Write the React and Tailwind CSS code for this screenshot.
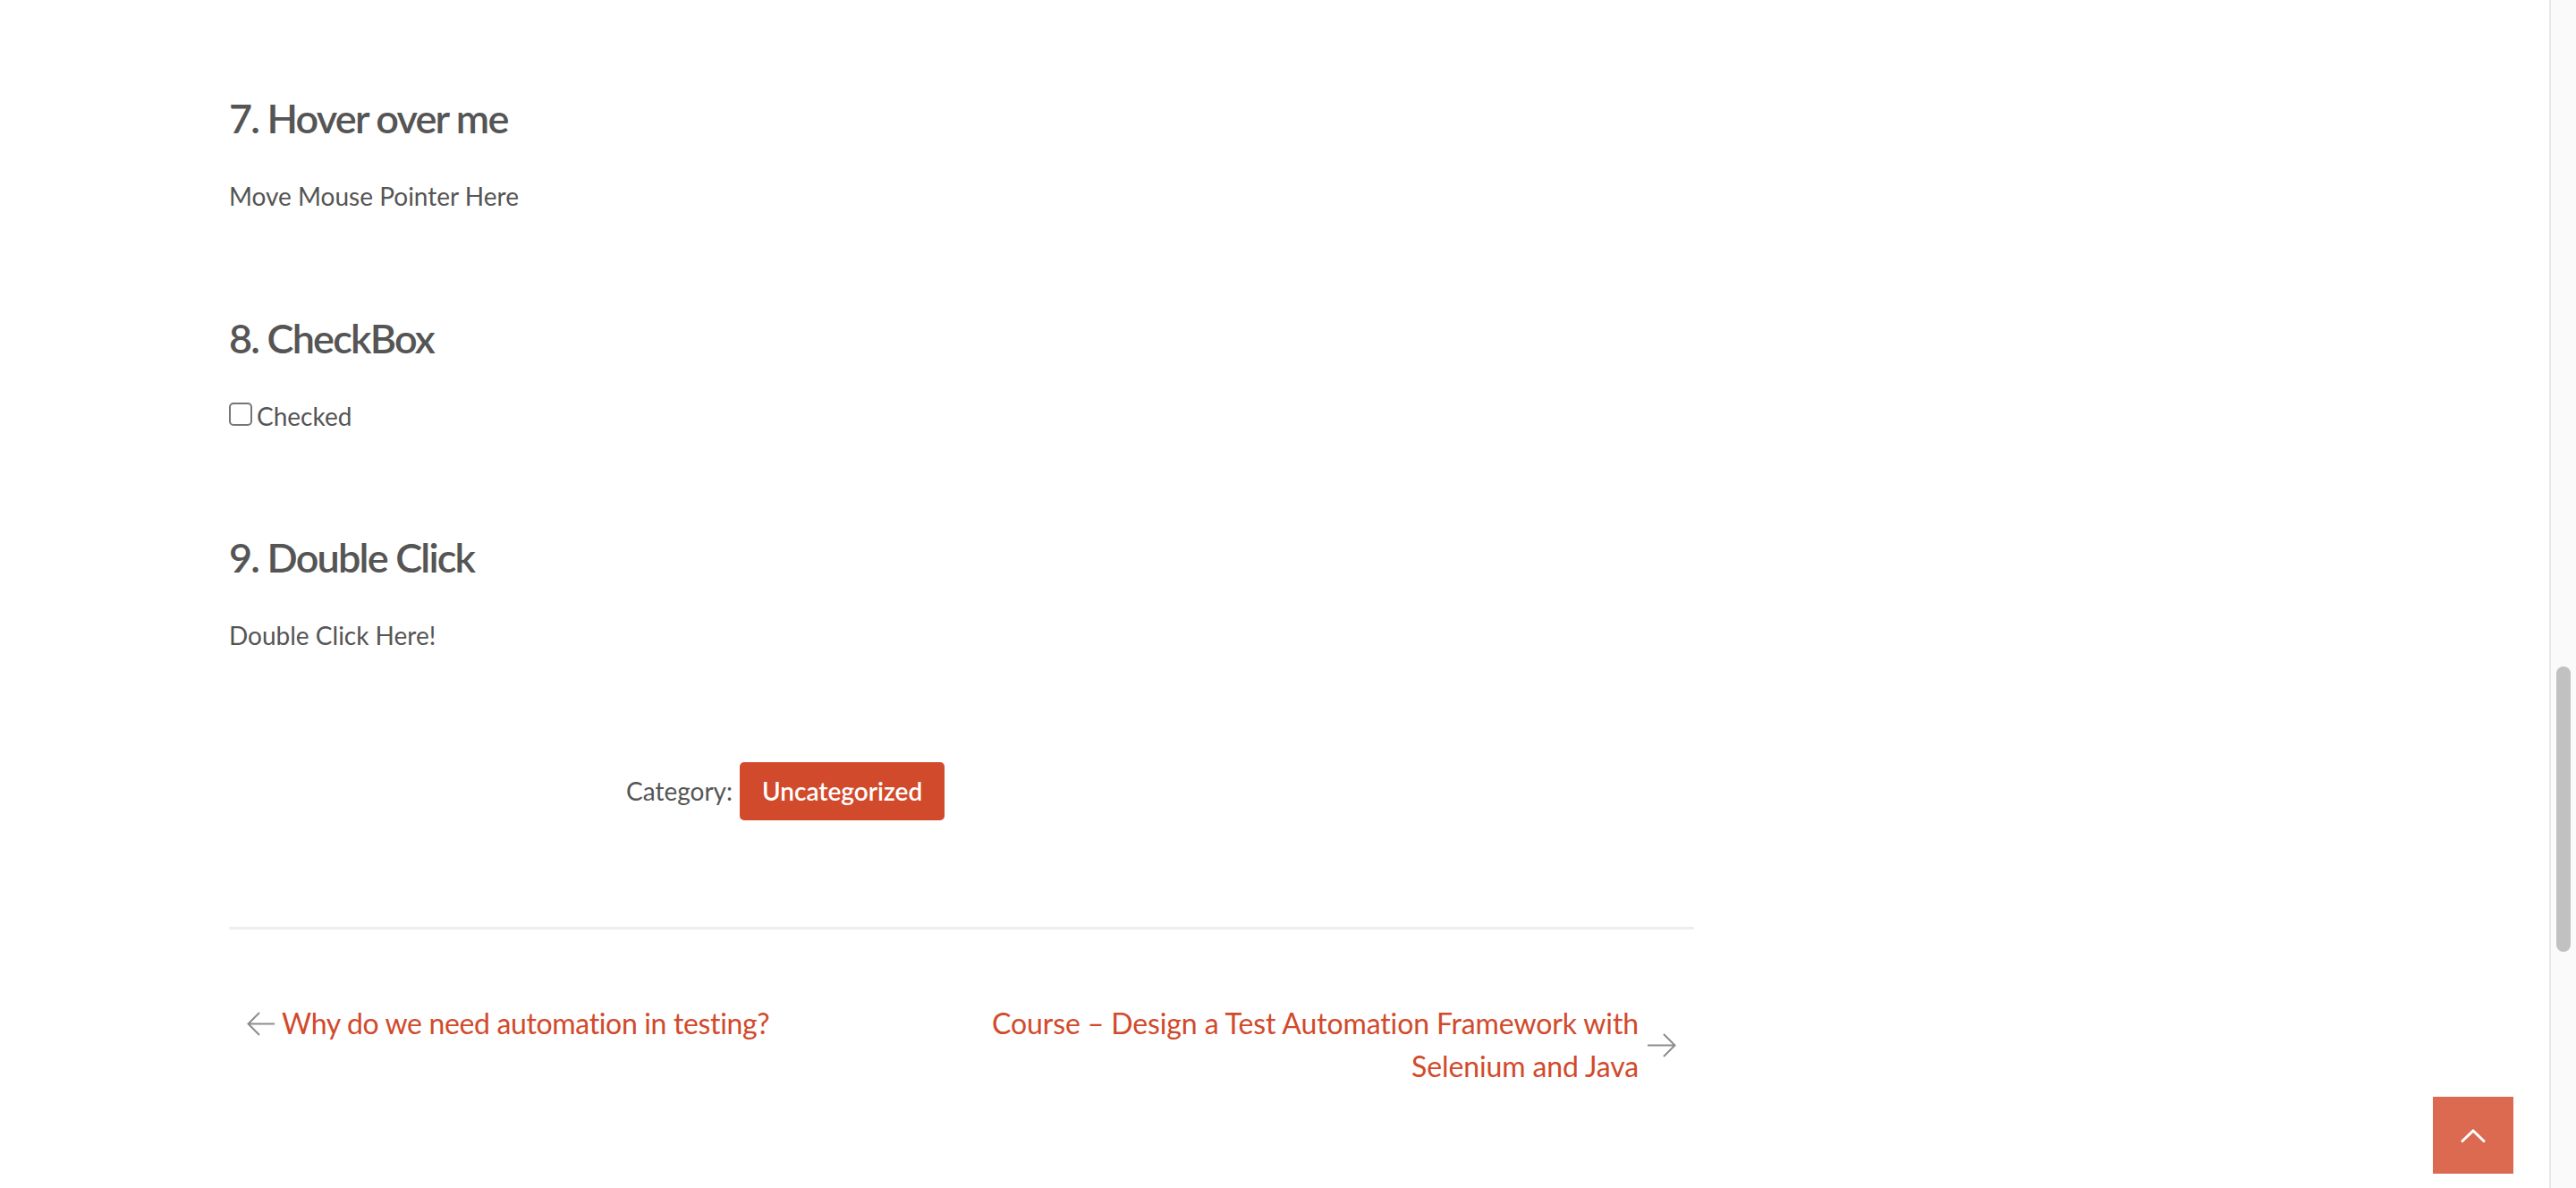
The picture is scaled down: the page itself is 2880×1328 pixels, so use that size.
import React from "react"

function Section({ title, children, className = "" }) {
  return (
    <section className={className}>
      <h2 className="text-[45px] leading-[54px] font-semibold tracking-[-1.8px] text-[#555]">{title}</h2>
      <div className="mt-[40px] text-[28px] leading-[40px]">{children}</div>
    </section>
  )
}

function ArrowLeft() {
  return (
    <svg width="31" height="27" viewBox="0 0 31 27" fill="none" stroke="#8c8c8c" strokeWidth="2">
      <path d="M1.5 13.5H31M14 1L1.5 13.5L14 26" />
    </svg>
  )
}

function ArrowRight() {
  return (
    <svg width="32" height="27" viewBox="0 0 32 27" fill="none" stroke="#8c8c8c" strokeWidth="2">
      <path d="M0 13.5H30.5M18 1L30.5 13.5L18 26" />
    </svg>
  )
}

export default function App() {
  return (
    <div className="flex h-[1328px] w-[2880px] overflow-hidden bg-white font-['Lato',sans-serif] text-[#555]">
      <main className="relative flex-1">
        <article className="ml-[256px] w-[1638px] pt-[105px]">
          <Section title="7. Hover over me">
            <p>Move Mouse Pointer Here</p>
          </Section>

          <Section title="8. CheckBox" className="mt-[112px]">
            <label>
              <span className="mr-[5px] inline-block h-[26px] w-[26px] rounded-[5px] border-2 border-[#767676] bg-white align-baseline" />
              Checked
            </label>
          </Section>

          <Section title="9. Double Click" className="mt-[111px]">
            <p>Double Click Here!</p>
          </Section>

          <div className="mt-[122px] flex items-baseline pl-[444px] text-[28px] leading-[40px]">
            <span>Category:</span>
            <a className="ml-[8px] rounded-[5px] bg-[#d14a2b] px-[25px] py-[12px] leading-[41px] font-semibold text-white">
              Uncategorized
            </a>
          </div>

          <div className="mt-[119px] h-[3px] bg-[#eeeeee]" />

          <nav className="mt-[81px] flex items-start justify-between px-[20px] text-[32px] leading-[48px] text-[#d14a2b]">
            <a className="flex items-center gap-[8px]">
              <ArrowLeft />
              <span className="tracking-[-0.35px]">Why do we need automation in testing?</span>
            </a>
            <a className="flex items-center gap-[10px]">
              <span className="w-[760px] text-right tracking-[-0.12px]">
                Course – Design a Test Automation Framework with Selenium and Java
              </span>
              <ArrowRight />
            </a>
          </nav>
        </article>

        <button className="absolute right-[40px] bottom-[16px] flex h-[86px] w-[90px] items-center justify-center bg-[#db6a51]">
          <svg width="28" height="18" viewBox="0 0 28 18" fill="none" stroke="#fff" strokeWidth="3" strokeLinecap="round">
            <polyline points="2,15.5 14,4 26,15.5" />
          </svg>
        </button>
      </main>

      <aside className="w-[30px] border-l-2 border-[#e8e8e8] bg-[#fafafa]">
        <div className="mt-[745px] ml-[6px] h-[319px] w-[16px] rounded-full bg-[#c1c1c1]" />
      </aside>
    </div>
  )
}
